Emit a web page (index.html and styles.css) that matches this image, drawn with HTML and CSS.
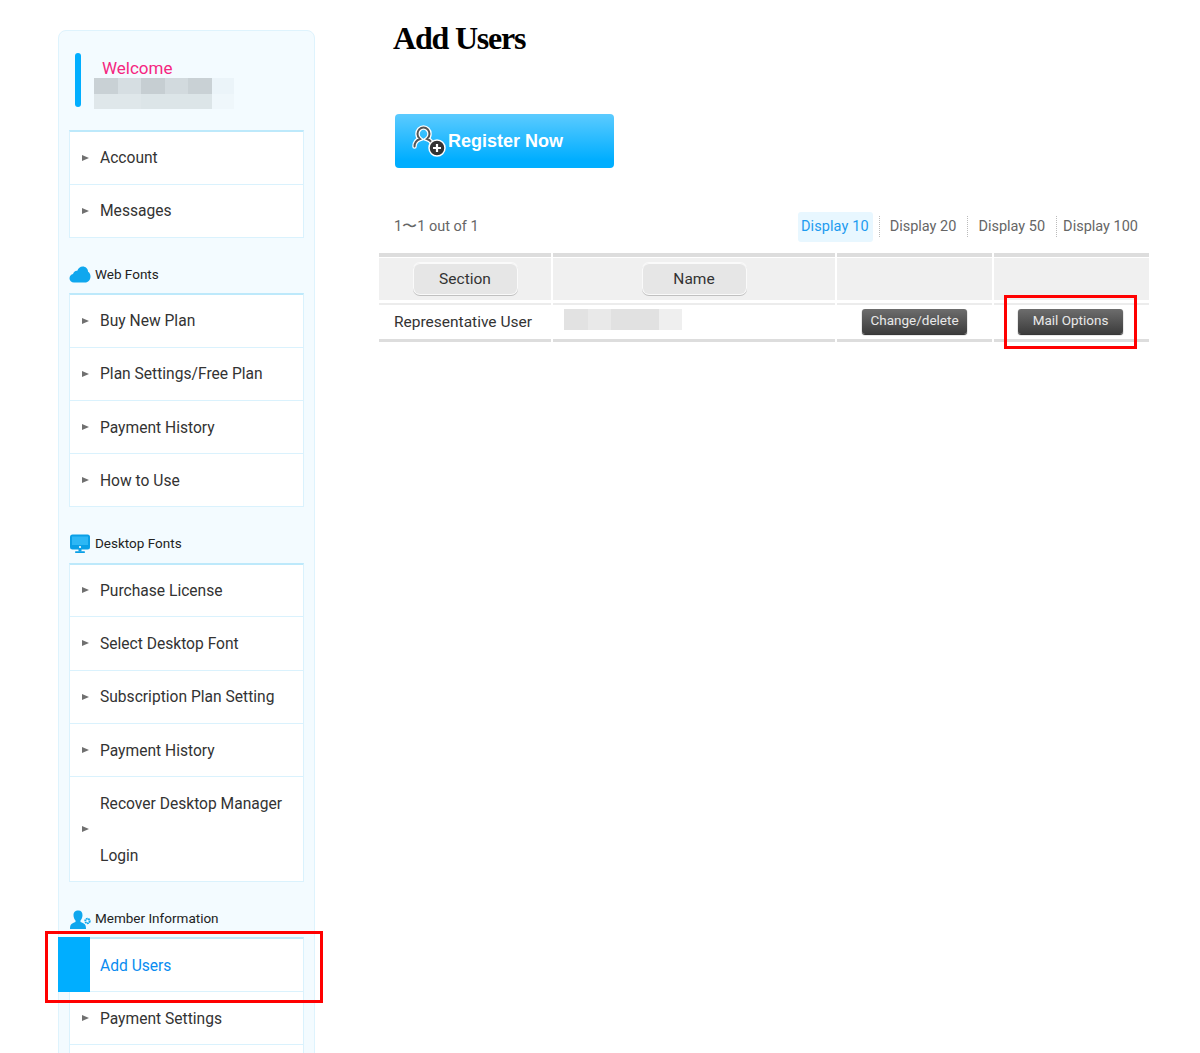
FILE: index.html
```html
<!DOCTYPE html>
<html lang="en">
<head>
<meta charset="utf-8">
<title>Add Users</title>
<link rel="stylesheet" href="styles.css">
</head>
<body>
<div class="page">
  <aside class="sidebar">
    <div class="welcome">
      <span class="welcome-bar"></span>
      <div class="welcome-text">
        <div class="welcome-title">Welcome</div>
        <div class="blur-name"></div>
      </div>
    </div>
    <ul class="menu">
      <li class="item"><span class="arrow"></span>Account</li>
      <li class="item"><span class="arrow"></span>Messages</li>
    </ul>
    <h2 class="section-head">
      <svg class="section-icon" width="22" height="20" viewBox="0 0 22 20"><path fill="#0fa7ee" d="M5 18.500C2.400 18.500.5 16.700.5 14.300c0-2.200 1.500-3.800 3.500-4.200C4.600 7.800 6.300 6.500 8.300 6.800 9.200 4.200 11.200 2.500 13.700 2.500c3 0 5.200 2.200 5.400 5.200 1.500.9 2.400 2.700 2.400 4.800 0 3.400-2.300 6-5.500 6z"/></svg>
      <span>Web Fonts</span>
    </h2>
    <ul class="menu">
      <li class="item"><span class="arrow"></span>Buy New Plan</li>
      <li class="item"><span class="arrow"></span>Plan Settings/Free Plan</li>
      <li class="item"><span class="arrow"></span>Payment History</li>
      <li class="item"><span class="arrow"></span>How to Use</li>
    </ul>
    <h2 class="section-head">
      <svg class="section-icon icon-desktop" width="22" height="20" viewBox="0 0 22 20"><rect x="1" y="0.500" width="20" height="15" rx="2.500" fill="#0a9fe6"/><rect x="3" y="2.500" width="16" height="8.500" fill="#2db7f5"/><circle cx="11" cy="13" r="1.100" fill="#fff"/><rect x="9.500" y="15" width="3" height="2.500" fill="#0a9fe6"/><rect x="6" y="17.300" width="10" height="1.800" rx=".8" fill="#0a9fe6"/></svg>
      <span>Desktop Fonts</span>
    </h2>
    <ul class="menu">
      <li class="item"><span class="arrow"></span>Purchase License</li>
      <li class="item"><span class="arrow"></span>Select Desktop Font</li>
      <li class="item"><span class="arrow"></span>Subscription Plan Setting</li>
      <li class="item"><span class="arrow"></span>Payment History</li>
      <li class="item item-tall"><span class="arrow"></span><span class="item-label">Recover Desktop Manager Login</span></li>
    </ul>
    <h2 class="section-head">
      <svg class="section-icon icon-member" width="22" height="21" viewBox="0 0 22 21"><path fill="#0fa7ee" d="M9.500 0.500c2.600 0 4 2 4 4.800 0 2.300-.9 4-2 5.200v1.600c1.800.8 4 1.500 4.800 3 .5.900.7 2.300.7 3.900H1c0-1.600.2-3 .7-3.900.8-1.500 3-2.200 4.800-3v-1.600c-1.100-1.200-2-2.900-2-5.200 0-2.800 1.400-4.800 5-4.800z"/><circle cx="18.500" cy="11" r="2.200" fill="none" stroke="#0fa7ee" stroke-width="2" stroke-dasharray="1.500 .5"/></svg>
      <span>Member Information</span>
    </h2>
    <ul class="menu">
      <li class="item item-active"><span class="active-mark"></span>Add Users</li>
      <li class="item"><span class="arrow"></span>Payment Settings</li>
      <li class="item"></li>
    </ul>
    <span class="highlight highlight-menu"></span>
  </aside>

  <main class="main">
    <h1 class="title">Add Users</h1>
    <a class="register" href="#">
      <svg class="register-icon" width="34" height="32" viewBox="0 0 34 32">
        <path d="M2.500 21.500c0-4 2.500-6.500 5.500-7.500-1.700-1.300-2.500-3-2.500-5 0-3.600 2.700-6.500 6-6.500s6 2.900 6 6.500c0 2-.8 3.700-2.500 5 3 1 5.500 3.500 5.500 7.500" fill="none" stroke="#fff" stroke-width="4.500" stroke-linecap="round"/>
        <path d="M2.500 21.500c0-4 2.500-6.500 5.500-7.500-1.700-1.300-2.500-3-2.500-5 0-3.600 2.700-6.500 6-6.500s6 2.900 6 6.500c0 2-.8 3.700-2.500 5 3 1 5.500 3.500 5.500 7.500" fill="none" stroke="#555" stroke-width="2" stroke-linecap="round"/>
        <circle cx="25" cy="23" r="8" fill="#333" stroke="#fff" stroke-width="1.500"/>
        <path d="M25 19v8M21 23h8" stroke="#fff" stroke-width="2.200"/>
      </svg>
      <span>Register Now</span>
    </a>
    <div class="pager">
      <span class="count">1〜1 out of 1</span>
      <ul class="display-list">
        <li class="display display-active">Display 10</li>
        <li class="display display-rule">Display 20</li>
        <li class="display display-rule">Display 50</li>
        <li class="display display-rule display-last">Display 100</li>
      </ul>
    </div>
    <table class="users">
      <colgroup>
        <col class="col-section"><col class="col-name"><col class="col-action"><col class="col-action">
      </colgroup>
      <thead>
        <tr>
          <th><button class="head-btn">Section</button></th>
          <th><button class="head-btn">Name</button></th>
          <th></th>
          <th></th>
        </tr>
      </thead>
      <tbody>
        <tr>
          <td class="cell-section">Representative User</td>
          <td class="cell-name"><div class="blur-user"></div></td>
          <td class="cell-action"><button class="dark-btn">Change/delete</button></td>
          <td class="cell-action"><button class="dark-btn dark-btn-mail">Mail Options</button></td>
        </tr>
      </tbody>
    </table>
    <span class="highlight highlight-mail"></span>
  </main>
</div>
</body>
</html>
```
FILE: styles.css
```css
* { box-sizing: border-box; }
html, body { margin: 0; padding: 0; background: #fff; }
body { font-family: Roboto, "Noto Sans", sans-serif; color: #333; }
.page { position: relative; display: flex; align-items: flex-start; height: 1053px; overflow: hidden; padding-left: 58px; }

.sidebar { position: relative; flex: none; width: 257px; margin-top: 30px; padding: 0 10px 40px; background: #f3fbff; border: 1px solid #def3fd; border-radius: 8px; }
.welcome { display: flex; height: 99px; padding-top: 22px; padding-left: 6px; }
.welcome-bar { flex: none; width: 6px; height: 54px; background: #00aeff; border-radius: 3px; }
.welcome-text { margin-left: 13px; }
.welcome-title { margin-left: 8px; height: 25px; font-size: 17px; line-height: 30px; color: #f5267f; }
.blur-name { width: 140px; height: 31px; background:
  linear-gradient(90deg, #c9d1d5 0 24px, #d6dee2 24px 47px, #c6ced2 47px 71px, #d2dade 71px 94px, #c9d1d5 94px 118px, #ebf4f9 118px) top / 100% 16px no-repeat,
  linear-gradient(90deg, #dfe7ea 0 47px, #dce5e8 47px 118px, #eff7fb 118px) bottom / 100% 15px no-repeat; }

.menu { list-style: none; margin: 0; padding: 0; background: #fff; border: 1px solid #daf2fd; border-top: 2px solid #bde9fb; }
.item { position: relative; display: flex; align-items: center; height: 53.330px; padding: 1px 0 0 30px; font-size: 15.600px; color: #333; border-bottom: 1px solid #daf2fd; }
.item:first-child { height: 52.670px; }
.item:last-child { border-bottom: 0; height: 52px; }
.item-tall:last-child { height: 103.670px; }
.item-label { line-height: 52px; }
.arrow { position: absolute; left: 12px; top: 50%; margin-top: -3px; width: 0; height: 0; border-left: 7px solid #707070; border-top: 3px solid transparent; border-bottom: 3px solid transparent; }
.item-active { color: #0a8cf0; }
.active-mark { position: absolute; left: -12px; top: -2px; width: 32px; height: 55px; background: #00aeff; }

.section-head { display: flex; align-items: center; height: 55.330px; margin: 0; padding-top: 17px; font-size: 13.500px; font-weight: 400; color: #222; }
.section-icon { flex: none; margin-right: 4px; }
.icon-desktop { margin-top: 2px; }
.icon-member { margin-top: 4px; }

.main { position: relative; flex: none; width: 770px; margin-left: 64px; }
.title { margin: 17px 0 0 14px; height: 50px; font-family: "Liberation Serif", serif; font-size: 32px; line-height: 42px; font-weight: 700; letter-spacing: -1.200px; color: #000; }
.register { display: flex; align-items: center; gap: 2px; width: 219px; height: 54px; margin: 47px 0 0 16px; padding-left: 17px; border-radius: 4px; background: linear-gradient(#5ccbff, #00aeff 85%); font-family: "Liberation Sans", Arial, sans-serif; font-size: 18px; font-weight: 700; color: #fff; text-decoration: none; }
.register-icon { flex: none; }

.pager { display: flex; justify-content: space-between; align-items: center; height: 30px; margin: 44px 0 11px; padding-left: 15px; font-size: 14.500px; color: #666; }
.count { padding-bottom: 2px; }
.display-list { display: flex; align-items: center; list-style: none; margin: 0; padding: 0; }
.display { height: 30px; line-height: 30px; padding: 0 3px; }
.display-active { padding-right: 4px; letter-spacing: .1px; color: #1e9bf0; background: #e8f7ff; border-radius: 3px; }
.display-rule { position: relative; margin-left: 6px; padding: 0 11px; }
.display-rule::before { content: ""; position: absolute; left: 0; top: 4px; height: 21px; border-left: 1px dotted #bbb; }
.display-rule + .display-rule { margin-left: 0; }
.display-last { padding: 0 11px 0 7px; }

.users { width: 774px; margin-left: -2px; table-layout: fixed; border-collapse: separate; border-spacing: 2px 0; }
.col-section { width: 172px; }
.col-name { width: 282px; }
.col-action { width: 155px; }
.users th { height: 50px; padding: 5px 0 8px; background: #f0f0f0; border-top: 4px solid #ddd; box-shadow: inset 0 1px 0 #fff; background-clip: padding-box; text-align: center; vertical-align: top; position: relative; }
.users th::after { content: ""; position: absolute; left: 0; right: 0; bottom: 0; height: 3px; background: #fff; }
.users td { height: 39px; padding: 0; background: #fff; border-top: 2px solid #ececec; border-bottom: 3px solid #ddd; font-size: 15.500px; color: #333; }
.cell-section { padding-left: 15px !important; white-space: nowrap; }
.cell-name { padding-left: 11px !important; vertical-align: top; }
.blur-user { width: 118px; height: 21px; margin-top: 4px; background: linear-gradient(90deg, #e2e2e2 0 24px, #e9e9e9 24px 47px, #e1e1e1 47px 95px, #efefef 95px); }
.cell-action { text-align: center; vertical-align: top; }
.head-btn { display: block; width: 103px; height: 31px; margin: 1px auto 0; padding: 0; font: 400 15.500px Roboto, sans-serif; color: #333; background: #e6e6e6; border: 0; border-radius: 6px; box-shadow: inset 0 1px 0 #fafafa, 0 0 0 1px #fafafa, 0 1px 0 1px #c0c0c0; }
.dark-btn { display: block; width: 105px; height: 25px; margin: 4px auto 0; padding: 0 0 3px; font: 400 13.500px Roboto, sans-serif; color: #e8e8e8; background: linear-gradient(#6d6d6d, #3c3c3c); border: 0; border-radius: 3px; box-shadow: 0 1px 1px #222; }
.dark-btn-mail { margin-left: 24px; }

.highlight { position: absolute; border: 3px solid #f00; pointer-events: none; }
.highlight-menu { left: -14px; top: 900px; width: 278px; height: 72px; }
.highlight-mail { left: 625px; top: 295px; width: 133px; height: 54px; }
```
